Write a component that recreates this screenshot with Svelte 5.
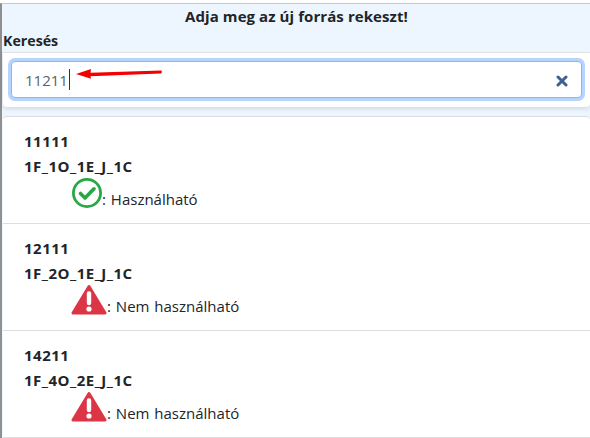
<script>
  const rows = [
    { code: '11111', name: '1F_1O_1E_J_1C', ok: true, label: 'Használható' },
    { code: '12111', name: '1F_2O_1E_J_1C', ok: false, label: 'Nem használható' },
    { code: '14211', name: '1F_4O_2E_J_1C', ok: false, label: 'Nem használható' }
  ];
</script>

<div class="page">
  <div class="frame">
    <header class="head">
      <h1>Adja meg az új forrás rekeszt!</h1>
      <label for="s">Keresés</label>
    </header>
    <div class="searchbar">
      <div class="input">
        <span id="s" class="value">11211</span><span class="caret"></span>
        <svg class="arrow" width="88" height="14" viewBox="0 0 88 14"><path d="M0 8 L15 3 L14.5 6.8 L85 4.4 Q87 6 85 7.4 L14.5 10.2 L15 12.8 Z" fill="#f50000"/></svg>
        <svg class="clear" width="12" height="12" viewBox="0 0 12 12"><path d="M2 2 L10 10 M10 2 L2 10" stroke="#3f5f93" stroke-width="3" stroke-linecap="round"/></svg>
      </div>
    </div>
    <ul class="list">
      {#each rows as r}
        <li>
          <div class="b">{r.code}</div>
          <div class="b name">{r.name}</div>
          <div class="status">
            {#if r.ok}
              <svg class="ok" width="30" height="30" viewBox="0 0 30 30"><circle cx="15" cy="15" r="13.6" fill="none" stroke="#28a745" stroke-width="2.8"/><path d="M8.5 15.5 L13 20 L22 10.8" fill="none" stroke="#28a745" stroke-width="3.6" stroke-linecap="round" stroke-linejoin="round"/></svg>
            {:else}
              <svg class="bad" width="36" height="32" viewBox="0 0 36 32"><path d="M18 2.5 L34 29 H2 Z" fill="#dc3545" stroke="#dc3545" stroke-width="3" stroke-linejoin="round"/><path d="M18 9.5 V19" stroke="#fff" stroke-width="4.4" stroke-linecap="round"/><circle cx="18" cy="25" r="2.6" fill="#fff"/></svg>
            {/if}
            <span>: {r.label}</span>
          </div>
        </li>
      {/each}
    </ul>
  </div>
</div>

<style>
  :global(body) { margin: 0; background: #fff; }
  .page { width: 590px; height: 438px; padding-top: 3px; box-sizing: border-box; overflow: hidden; font-family: "Open Sans", "Noto Sans", sans-serif; color: #212529; }
  .frame { border-top: 1px solid #c8c8c8; border-left: 2px solid #8f8f8f; height: 100%; box-sizing: border-box; background: #edf6ff; }
  .head { background: #edf6ff; height: 48px; padding-left: 1px; border-bottom: 1px solid #e3e5e8; }
  h1 { margin: 0; font-size: 15px; letter-spacing: .08px; line-height: 24px; font-weight: 700; text-align: center; color: #212529; }
  label { display: block; font-size: 14.2px; line-height: 24px; font-weight: 700; margin-top: 1px; }
  .searchbar { background: #fff; margin-left: 1px; padding: 8px; height: 54px; box-sizing: border-box; border-radius: 0 0 4px 4px; box-shadow: 0 2px 4px rgba(0,0,0,.12); position: relative; }
  .input { display: flex; align-items: center; height: 37px; box-sizing: border-box; border: 1px solid #86b7fe; border-radius: 4px; box-shadow: 0 0 0 3px #b6d4fe; padding-left: 13px; position: relative; background: #fff; }
  .value { font-size: 15px; color: #59626a; }
  .caret { width: 1px; height: 21px; background: #333; margin-left: 1px; }
  .arrow { position: absolute; left: 64px; top: 4px; }
  .clear { position: absolute; right: 13px; top: 13px; }
  .list { list-style: none; margin: 9px 0 0 1px; padding: 0; background: #fff; border-top: 1px solid #dcdcdc; border-radius: 4px 4px 0 0; }
  li { height: 107px; box-sizing: border-box; padding: 12px 21px 0; border-bottom: 1px solid #dedede; }
  .b { font-weight: 700; font-size: 15px; letter-spacing: .5px; line-height: 25px; }
  .name { line-height: 24px; margin-bottom: 1px; }
  .status { display: flex; align-items: flex-start; margin-left: 47px; font-size: 15px; line-height: 20px; height: 32px; }
  .status span { margin-top: 10px; word-spacing: 1px; }
  .ok { margin: -1px 0 0 1px; }
  .bad { margin-top: -2px; }
</style>
